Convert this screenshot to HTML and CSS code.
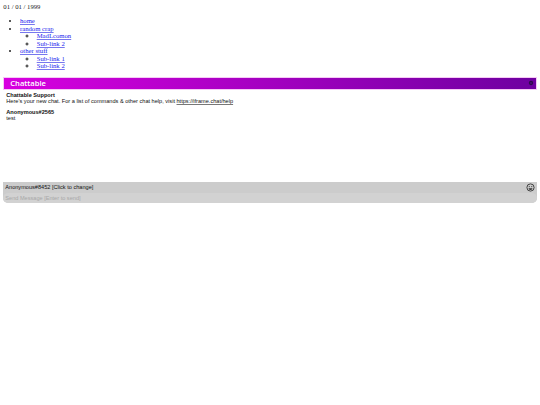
FILE: index.html
```html
<!DOCTYPE html>
<html lang="en">
<head>
    <meta charset="UTF-8">
    <title>Chattable</title>
    <link rel="stylesheet" href="styles.css">
</head>
<body>
    <p class="date">01 / 01 / 1999</p>

    <ul class="nav">
        <li><a href="#">home</a></li>
        <li>
            <a href="#">random crap</a>
            <ul>
                <li><a href="#">MadLcomon</a></li>
                <li><a href="#">Sub-link 2</a></li>
            </ul>
        </li>
        <li>
            <a href="#">other stuff</a>
            <ul>
                <li><a href="#">Sub-link 1</a></li>
                <li><a href="#">Sub-link 2</a></li>
            </ul>
        </li>
    </ul>

    <div class="chat">
        <div class="chat-head">
            <span class="chat-logo">Chattable</span>
            <svg class="chat-gear" viewBox="0 0 10 10">
                <circle cx="5" cy="5" r="3.6" fill="#2a0a4a"/>
                <circle cx="5" cy="5" r="1.2" fill="#6a0a9a"/>
            </svg>
        </div>
        <div class="chat-log">
            <div class="msg">
                <b>Chattable Support</b>
                <div>Here's your new chat. For a list of commands &amp; other chat help, visit <a href="#">https://iframe.chat/help</a></div>
            </div>
            <div class="msg">
                <b>Anonymous#2565</b>
                <div>test</div>
            </div>
        </div>
        <div class="chat-foot">
            <div class="chat-user">
                <span>Anonymous#8452 [Click to change]</span>
                <svg class="chat-smile" viewBox="0 0 10 10">
                    <circle cx="5" cy="5" r="4" fill="none" stroke="#333" stroke-width="1"/>
                    <circle cx="3.6" cy="4" r="0.6" fill="#333"/>
                    <circle cx="6.4" cy="4" r="0.6" fill="#333"/>
                    <path d="M2.8 5.8h4.4a2.2 2 0 0 1-4.4 0z" fill="#333"/>
                </svg>
            </div>
            <div class="chat-input">Send Message [Enter to send]</div>
        </div>
    </div>
</body>
</html>
```

FILE: styles.css
```css
body {
    margin: 3.3px;
    font-family: "Liberation Serif", serif;
    font-size: 6.7px;
    color: #222;
}

.date {
    margin: 0;
    line-height: 7.5px;
}

.nav {
    margin: 6.7px 0;
    padding-left: 16.7px;
    line-height: 7.5px;
}

.nav ul {
    margin: 0;
    padding-left: 16.7px;
}

.nav a {
    color: #2222ee;
    text-decoration-color: #7777ee;
}

.chat {
    font-family: "Liberation Sans", sans-serif;
    font-size: 5.6px;
    color: #111;
    margin-top: 6.5px;
}

.chat-head {
    height: 11px;
    display: flex;
    justify-content: space-between;
    align-items: center;
    padding: 0 2px 0 6px;
    border: 0.5px solid #f6c8f6;
    background: linear-gradient(to right, #d800e0, #6e00a0);
}

.chat-logo {
    color: #fff;
    font-family: "Open Sans", sans-serif;
    font-weight: 600;
    font-size: 7.6px;
}

.chat-gear {
    width: 6px;
    height: 6px;
}

.chat-log {
    height: 92.5px;
    padding: 2.5px 3px 0;
    box-sizing: border-box;
}

.chat-log a {
    color: #111;
    text-decoration-color: #777;
}

.msg {
    line-height: 6.2px;
    margin-bottom: 4.2px;
}

.chat-foot {
    background: #cccccc;
    border-radius: 0 0 5px 5px;
}

.chat-user {
    display: flex;
    justify-content: space-between;
    align-items: center;
    height: 10.5px;
    padding: 0 2px;
}

.chat-smile {
    width: 9px;
    height: 9px;
}

.chat-input {
    height: 10.5px;
    line-height: 10.5px;
    padding: 0 2px;
    color: #a8a8a8;
    background: #d2d2d2;
    border-radius: 5px;
}
```
